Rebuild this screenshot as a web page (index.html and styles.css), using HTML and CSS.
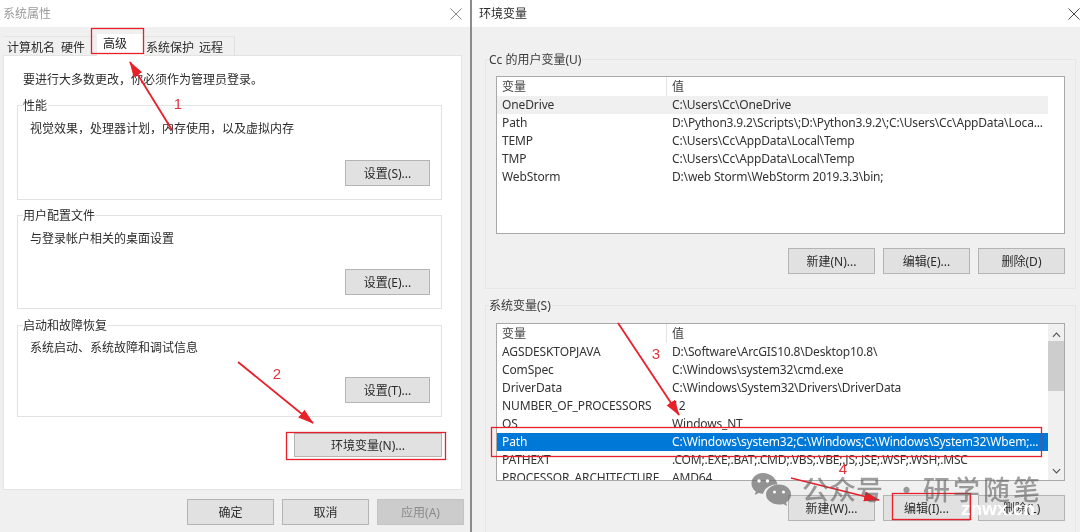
FILE: index.html
```html
<!DOCTYPE html>
<html lang="zh-CN">
<head>
<meta charset="utf-8">
<title>系统属性与环境变量</title>
<link rel="stylesheet" href="styles.css">
</head>
<body>
<div class="screen">
  <section class="win win-left">
    <header class="title title-dim">
      <span class="title-text">系统属性</span>
      <svg class="close" viewBox="0 0 12 12"><path d="M.5.5l11 11M11.500.5l-11 11"/></svg>
    </header>
    <nav class="tabs">
      <span class="tab t1">计算机名</span>
      <span class="tab t2">硬件</span>
      <span class="tab t3 active">高级</span>
      <span class="tab t4">系统保护</span>
      <span class="tab t5">远程</span>
    </nav>
    <div class="panel">
      <p class="intro">要进行大多数更改，你必须作为管理员登录。</p>
      <div class="group group-a">
        <span class="legend">性能</span>
        <p class="desc">视觉效果，处理器计划，内存使用，以及虚拟内存</p>
        <button class="btn btn-set">设置(S)...</button>
      </div>
      <div class="group group-b">
        <span class="legend">用户配置文件</span>
        <p class="desc">与登录帐户相关的桌面设置</p>
        <button class="btn btn-set">设置(E)...</button>
      </div>
      <div class="group group-c">
        <span class="legend">启动和故障恢复</span>
        <p class="desc desc-tight">系统启动、系统故障和调试信息</p>
        <button class="btn btn-set">设置(T)...</button>
      </div>
      <button class="btn btn-env">环境变量(N)...</button>
    </div>
    <footer class="foot">
      <button class="btn btn-foot">确定</button>
      <button class="btn btn-foot">取消</button>
      <button class="btn btn-foot disabled">应用(A)</button>
    </footer>
  </section>

  <section class="win win-right">
    <header class="title">
      <span class="title-text">环境变量</span>
      <svg class="close" viewBox="0 0 12 12"><path d="M.5.5l11 11M11.500.5l-11 11"/></svg>
    </header>
    <div class="vars">
      <div class="vgroup vgroup-user">
        <span class="legend legend-gray">Cc 的用户变量(U)</span>
        <div class="list">
          <div class="rows">
            <div class="row head"><span class="k">变量</span><span class="v">值</span></div>
            <div class="row soft"><span class="k">OneDrive</span><span class="v">C:\Users\Cc\OneDrive</span></div>
            <div class="row"><span class="k">Path</span><span class="v">D:\Python3.9.2\Scripts\;D:\Python3.9.2\;C:\Users\Cc\AppData\Loca...</span></div>
            <div class="row"><span class="k">TEMP</span><span class="v">C:\Users\Cc\AppData\Local\Temp</span></div>
            <div class="row"><span class="k">TMP</span><span class="v">C:\Users\Cc\AppData\Local\Temp</span></div>
            <div class="row"><span class="k">WebStorm</span><span class="v">D:\web Storm\WebStorm 2019.3.3\bin;</span></div>
          </div>
        </div>
        <div class="actions">
          <button class="btn btn-var">新建(N)...</button>
          <button class="btn btn-var">编辑(E)...</button>
          <button class="btn btn-var">删除(D)</button>
        </div>
      </div>
      <div class="vgroup vgroup-sys">
        <span class="legend legend-gray">系统变量(S)</span>
        <div class="list">
          <div class="rows">
            <div class="row head"><span class="k">变量</span><span class="v">值</span></div>
            <div class="row"><span class="k">AGSDESKTOPJAVA</span><span class="v">D:\Software\ArcGIS10.8\Desktop10.8\</span></div>
            <div class="row"><span class="k">ComSpec</span><span class="v">C:\Windows\system32\cmd.exe</span></div>
            <div class="row"><span class="k">DriverData</span><span class="v">C:\Windows\System32\Drivers\DriverData</span></div>
            <div class="row"><span class="k">NUMBER_OF_PROCESSORS</span><span class="v">12</span></div>
            <div class="row"><span class="k">OS</span><span class="v">Windows_NT</span></div>
            <div class="row selected"><span class="k">Path</span><span class="v">C:\Windows\system32;C:\Windows;C:\Windows\System32\Wbem;...</span></div>
            <div class="row"><span class="k">PATHEXT</span><span class="v">.COM;.EXE;.BAT;.CMD;.VBS;.VBE;.JS;.JSE;.WSF;.WSH;.MSC</span></div>
            <div class="row"><span class="k">PROCESSOR_ARCHITECTURE</span><span class="v">AMD64</span></div>
          </div>
          <div class="scrollbar">
            <svg class="chev" viewBox="0 0 10 6"><path d="M1 5l4-4 4 4"/></svg>
            <div class="thumb"></div>
            <svg class="chev chev-down" viewBox="0 0 10 6"><path d="M1 1l4 4 4-4"/></svg>
          </div>
        </div>
        <div class="actions">
          <button class="btn btn-var">新建(W)...</button>
          <button class="btn btn-var">编辑(I)...</button>
          <button class="btn btn-var">删除(L)</button>
        </div>
      </div>
    </div>
  </section>

  <svg class="overlay" viewBox="0 0 1080 532">
    <defs>
      <marker id="head" markerUnits="userSpaceOnUse" markerWidth="16" markerHeight="12" refX="15" refY="6" orient="auto">
        <path d="M0 1L16 6 0 11z" fill="#e8202a"/>
      </marker>
    </defs>
    <g class="mark-box">
      <rect x="91.500" y="28.500" width="52" height="25"/>
      <rect x="286.500" y="432.500" width="159" height="27"/>
      <rect x="491.500" y="427.500" width="550" height="29"/>
      <rect x="892.500" y="493.500" width="78" height="26"/>
    </g>
    <g class="mark-arrow">
      <line x1="172" y1="130" x2="130" y2="62" marker-end="url(#head)"/>
      <line x1="238" y1="362" x2="313" y2="423" marker-end="url(#head)"/>
      <line x1="618" y1="323" x2="679" y2="415" marker-end="url(#head)"/>
      <line x1="791" y1="478" x2="879" y2="500" marker-end="url(#head)"/>
    </g>
    <g class="mark-num">
      <text x="178" y="109">1</text>
      <text x="277" y="379">2</text>
      <text x="656" y="359">3</text>
      <text x="843" y="474">4</text>
    </g>
    <g class="wm-icon">
      <path d="M763 473c-6.500 0-11.500 4.500-11.500 10.500 0 3.400 1.700 6.200 4.300 8.100l-1 3.400 3.900-2c1.300.4 2.700.6 4.300.7 2-7 8.500-9.500 14.500-9.300C776 478 770.500 473 763 473z"/>
      <path d="M779 484.500c-7 0-13 4.500-13 10s6 10 13 10c1.500 0 2.900-.2 4.200-.6l3.900 2-1-3.300c3-1.900 5-4.800 5-8.100 0-5.500-5-10-12.100-10z"/>
      <g class="wm-eye">
        <circle cx="759" cy="481" r="1.700"/><circle cx="767.500" cy="481" r="1.700"/>
        <circle cx="774.500" cy="492" r="1.500"/><circle cx="783.500" cy="492" r="1.500"/>
      </g>
    </g>
    <text class="wm-text" x="802" y="500">公众号<tspan x="893">·</tspan><tspan class="wm-tail" x="923">研学随笔</tspan></text>
    <text class="wm-site" x="961" y="515">znwx.cn</text>
  </svg>
</div>
</body>
</html>
```

FILE: styles.css
```css
* { box-sizing: border-box; }
html, body { margin: 0; padding: 0; }
body { width: 1080px; height: 532px; overflow: hidden; background: #f0f0f0; }
p { margin: 0; }

.screen {
  position: relative;
  display: flex;
  width: 1080px;
  height: 532px;
  overflow: hidden;
  font: 12px/18px "Noto Sans", "Noto Sans CJK SC", sans-serif;
  color: #2b2b2b;
  filter: blur(0.4px);
}

.win { display: flex; flex-direction: column; height: 532px; background: #f0f0f0; }
.win-left { width: 472px; border-right: 2px solid #8b8b8b; }
.win-right { width: 608px; }

.title {
  display: flex;
  flex: none;
  align-items: center;
  justify-content: space-between;
  height: 27px;
  background: #fff;
}
.win-left .title { padding: 0 8px 0 3px; }
.win-right .title { padding: 0 0 0 7px; }
.title-dim { color: #9b9b9b; }
.close { width: 12px; height: 12px; fill: none; stroke: #8a8a8a; stroke-width: 1; }
.win-right .close { stroke: #444; }

.tabs { display: flex; flex: none; align-items: flex-end; height: 28px; padding-left: 3px; }
.tab { height: 19px; line-height: 21px; background: #f0f0f0; border-top: 1px solid #e6e6e6; }
.t1 { padding: 0 4px; }
.t2 { padding: 0 12px 0 2px; }
.t3 { padding: 0 17px 0 6px; }
.t4 { padding: 0 4px 0 2px; }
.t5 { padding: 0 11px 0 1px; border-right: 1px solid #e0e0e0; }
.tab.active {
  position: relative;
  height: 22px;
  margin-bottom: -1px;
  line-height: 19px;
  background: #fff;
  border-top: 0;
  color: #222;
}

.panel {
  display: flex;
  flex-direction: column;
  flex: none;
  width: 459px;
  height: 435px;
  margin-left: 3px;
  padding: 14px 19px 0 13px;
  background: #fff;
  border: 1px solid #e3e3e3;
}
.intro { height: 18px; padding-left: 6px; line-height: 20px; }

.group {
  display: flex;
  flex-direction: column;
  flex: none;
  padding: 0 11px 13px 12px;
  border: 1px solid #e2e2e2;
}
.group-a { height: 95px; margin-top: 17px; }
.group-b { height: 94px; margin-top: 15px; }
.group-c { height: 92px; margin-top: 16px; }

.legend {
  align-self: flex-start;
  height: 18px;
  margin: -10px 0 0 -7px;
  padding: 0 1px 0 0;
  line-height: 20px;
  background: #fff;
}
.legend-gray { background: #f0f0f0; color: #3a3a3a; }
.desc { margin-top: 6px; }
.desc-tight { margin-top: 5px; }

.btn {
  flex: none;
  height: 26px;
  padding: 1px 0 0;
  font: inherit;
  color: #2b2b2b;
  background: #e1e1e1;
  border: 1px solid #b4b4b4;
}
.btn-set { align-self: flex-end; width: 85px; margin-top: auto; }
.btn-env { align-self: flex-end; width: 148px; height: 24px; margin: 16px 0 0; }
.foot { display: flex; justify-content: flex-end; gap: 8px; padding: 9px 6px 0 0; }
.btn-foot { width: 87px; }
.btn.disabled { background: #cccccc; color: #8a8a8a; border-color: #c4c4c4; }

.vars { display: flex; flex-direction: column; flex: 1; padding-left: 13px; }
.vgroup {
  display: flex;
  flex-direction: column;
  flex: none;
  width: 591px;
  padding: 0 10px;
  border: 1px solid #e6e6e6;
}
.vgroup-user { height: 230px; margin-top: 32px; }
.vgroup-sys { height: 240px; margin-top: 16px; }
.vgroup .list { margin-top: 8px; }
.vgroup-sys .list { margin-top: 9px; }

.list {
  display: flex;
  flex: none;
  width: 569px;
  height: 158px;
  overflow: hidden;
  background: #fff;
  border: 1px solid #a9a9a9;
}
.rows { width: 551px; flex: none; height: 156px; overflow: hidden; }
.row { display: flex; height: 18px; line-height: 18px; white-space: nowrap; color: #333; letter-spacing: -0.12px; }
.row.head { height: 19px; line-height: 20px; color: #444; }
.row.soft { background: #f0f0f0; }
.row.selected { background: #0078d7; color: #fff; }
.k { flex: none; width: 170px; padding-left: 5px; }
.v { flex: 1; padding-left: 5px; letter-spacing: -0.18px; }
.row.head .k { border-right: 1px solid #e5e5e5; }

.scrollbar {
  display: flex;
  flex-direction: column;
  align-items: center;
  width: 16px;
  margin-left: auto;
  background: #f0f0f0;
}
.thumb { width: 16px; height: 50px; background: #cdcdcd; margin-top: 3px; }
.chev { flex: none; width: 9px; height: 6px; margin-top: 8px; fill: none; stroke: #555; stroke-width: 1.300; }
.chev-down { margin-top: auto; margin-bottom: 6px; }

.actions { display: flex; justify-content: flex-end; gap: 8px; margin-top: 14px; }
.btn-var { width: 87px; }

.overlay { position: absolute; left: 0; top: 0; width: 1080px; height: 532px; pointer-events: none; }
.mark-box rect { fill: none; stroke: #e8202a; stroke-width: 1.300; }
.mark-arrow line { stroke: #e8202a; stroke-width: 1.800; }
.mark-num text { font: 15px "Liberation Sans", sans-serif; fill: #e2353d; text-anchor: middle; }
.wm-icon path { fill: #6e6e6e; fill-opacity: .72; }
.wm-eye circle { fill: #fff; }
.wm-text { font: 500 27px "Noto Sans CJK SC", sans-serif; fill: #5a5a5a; fill-opacity: .58; }
.wm-tail { letter-spacing: 3px; }
.wm-site { font: bold 19px "Liberation Sans", sans-serif; fill: #fff; }
```
